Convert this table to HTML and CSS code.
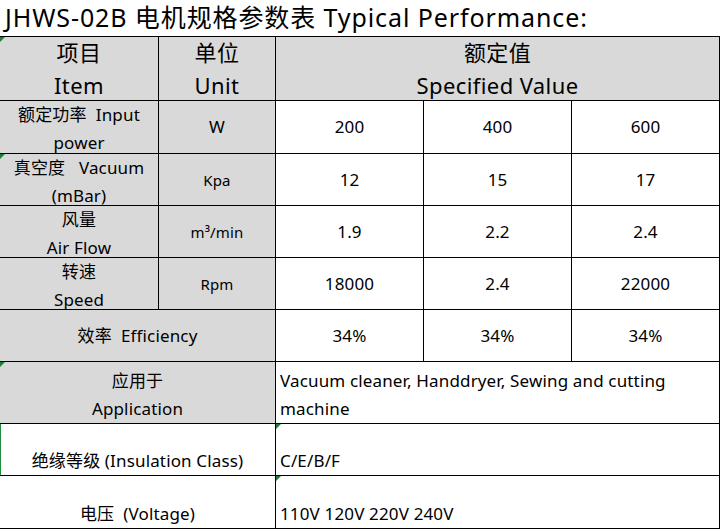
FILE: index.html
```html
<!DOCTYPE html>
<html lang="zh">
<head>
<meta charset="utf-8">
<title>JHWS-02B</title>
<link rel="stylesheet" href="styles.css">
</head>
<body>
<h1 class="title">JHWS-02B 电机规格参数表 Typical Performance:</h1>
<div class="sheet">
  <div class="cell head gray mark"><span>项目</span><span>Item</span></div>
  <div class="cell head gray"><span>单位</span><span>Unit</span></div>
  <div class="cell head gray span3"><span>额定值</span><span>Specified Value</span></div>

  <div class="cell gray label"><span>额定功率&nbsp;&nbsp;Input</span><span>power</span></div>
  <div class="cell gray">W</div>
  <div class="cell">200</div>
  <div class="cell">400</div>
  <div class="cell">600</div>

  <div class="cell gray label mark"><span>真空度&nbsp;&nbsp;&nbsp;Vacuum</span><span>(mBar)</span></div>
  <div class="cell gray small">Kpa</div>
  <div class="cell">12</div>
  <div class="cell">15</div>
  <div class="cell">17</div>

  <div class="cell gray label"><span>风量</span><span>Air Flow</span></div>
  <div class="cell gray small">m³/min</div>
  <div class="cell">1.9</div>
  <div class="cell">2.2</div>
  <div class="cell">2.4</div>

  <div class="cell gray label"><span>转速</span><span>Speed</span></div>
  <div class="cell gray small">Rpm</div>
  <div class="cell">18000</div>
  <div class="cell">2.4</div>
  <div class="cell">22000</div>

  <div class="cell gray span2">效率&nbsp;&nbsp;Efficiency</div>
  <div class="cell">34%</div>
  <div class="cell">34%</div>
  <div class="cell">34%</div>

  <div class="cell gray span2 label mark"><span>应用于</span><span>Application</span></div>
  <div class="cell span3 left label"><span>Vacuum cleaner, Handdryer, Sewing and cutting</span><span>machine</span></div>

  <div class="cell span2 bottom edge">绝缘等级 (Insulation Class)</div>
  <div class="cell span3 left bottom mark">C/E/B/F</div>

  <div class="cell span2 bottom">电压&nbsp;&nbsp;(Voltage)</div>
  <div class="cell span3 left bottom mark">110V 120V 220V 240V</div>
</div>
</body>
</html>
```

FILE: styles.css
```css
* { box-sizing: border-box; }
html, body { margin: 0; padding: 0; background: #fff; }
body {
  width: 721px;
  height: 529px;
  overflow: hidden;
  font-family: "Noto Sans", "Noto Sans CJK SC", sans-serif;
  color: #000;
}
.title {
  margin: 0;
  height: 36px;
  padding-left: 5px;
  font-weight: normal;
  font-size: 25px;
  letter-spacing: 0.9px;
  line-height: 34px;
  white-space: nowrap;
}
.sheet {
  display: grid;
  width: 720px;
  grid-template-columns: 158px 116px 147px 147px 147px;
  grid-template-rows: 63px 52px 51px 51px 51px 51px 61px 51px 52px;
  gap: 1px;
  padding: 1px 1px 1px 0;
  background: #000;
}
.cell {
  position: relative;
  background: #fff;
  display: flex;
  flex-direction: column;
  justify-content: center;
  align-items: center;
  font-size: 17px;
  letter-spacing: 0.15px;
  line-height: 28px;
  white-space: nowrap;
  text-align: center;
}
.cell span { display: block; }
.gray { background: #d9d9d9; }
.head { font-size: 22px; letter-spacing: 0.4px; line-height: 33px; }
.label { padding-top: 4px; }
.small { font-size: 15px; }
.span2 { grid-column: span 2; }
.span3 { grid-column: span 3; }
.left { align-items: flex-start; padding-left: 4px; text-align: left; }
.bottom { justify-content: flex-end; }
.mark::before {
  content: "";
  position: absolute;
  left: 0;
  top: 0;
  border-top: 5px solid #1e7d32;
  border-right: 5px solid transparent;
}
.edge::after {
  content: "";
  position: absolute;
  left: 0;
  top: 0;
  bottom: 0;
  width: 1px;
  background: #1e8c3a;
}
```
